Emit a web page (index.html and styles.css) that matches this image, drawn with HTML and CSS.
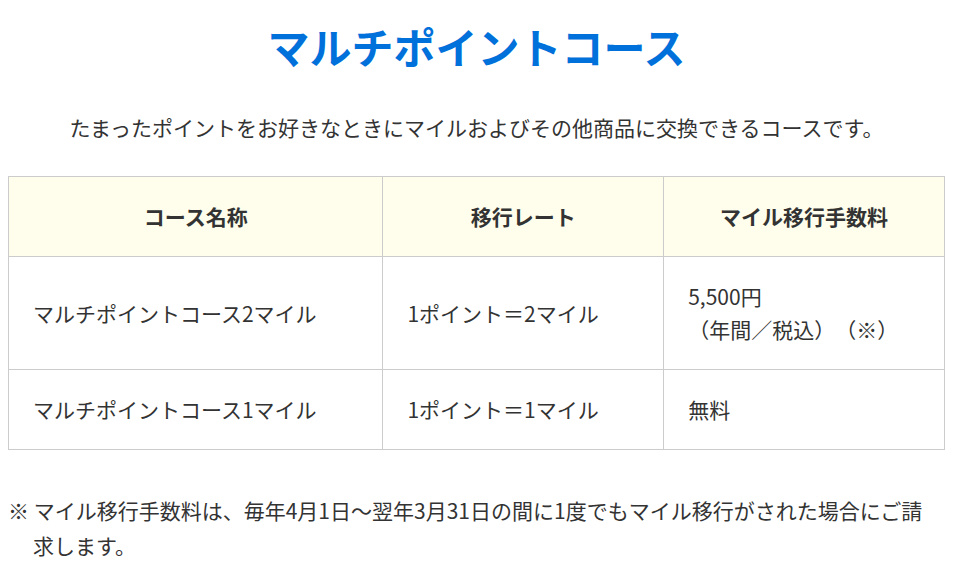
FILE: index.html
```html
<!DOCTYPE html>
<html lang="ja">
<head>
<meta charset="utf-8">
<title>マルチポイントコース</title>
<link rel="stylesheet" href="styles.css">
</head>
<body>
<main class="page">
  <h1 class="title">マルチポイントコース</h1>
  <p class="lead">たまったポイントをお好きなときにマイルおよびその他商品に交換できるコースです。</p>
  <table class="course-table">
    <colgroup>
      <col class="col-name">
      <col class="col-rate">
      <col class="col-fee">
    </colgroup>
    <thead>
      <tr>
        <th>コース名称</th>
        <th>移行レート</th>
        <th>マイル移行手数料</th>
      </tr>
    </thead>
    <tbody>
      <tr>
        <td>マルチポイントコース2マイル</td>
        <td>1ポイント＝2マイル</td>
        <td>5,500円<br>（年間／税込）（※）</td>
      </tr>
      <tr>
        <td>マルチポイントコース1マイル</td>
        <td>1ポイント＝1マイル</td>
        <td>無料</td>
      </tr>
    </tbody>
  </table>
  <p class="note">※ マイル移行手数料は、毎年4月1日～翌年3月31日の間に1度でもマイル移行がされた場合にご請求します。</p>
</main>
</body>
</html>
```

FILE: styles.css
```css
html, body {
  margin: 0;
  padding: 0;
  background: #ffffff;
}

body {
  font-family: "Noto Sans CJK JP", "Noto Sans", sans-serif;
  color: #333333;
  font-size: 21px;
  text-spacing-trim: space-all;
}

.page {
  padding: 0 11px 0 8px;
}

.title {
  margin: 16px 0 0;
  font-size: 42px;
  line-height: 59px;
  font-weight: 700;
  color: #0070da;
  text-align: center;
}

.lead {
  margin: 36px 0 0;
  line-height: 33px;
  text-align: center;
}

.course-table {
  margin-top: 32px;
  width: 100%;
  border-collapse: collapse;
  table-layout: fixed;
}

.col-name { width: 40%; }
.col-rate { width: 30%; }
.col-fee { width: 30%; }

.course-table th,
.course-table td {
  border: 1px solid #cccccc;
  padding: 23px 24px;
  line-height: 33px;
  vertical-align: middle;
  font-weight: 400;
  text-align: left;
}

.course-table th {
  background: #fffeec;
  font-weight: 700;
  text-align: center;
}

.note {
  margin: 43px 8px 0 0;
  padding-left: 25px;
  text-indent: -25px;
  line-height: 35px;
}
```
